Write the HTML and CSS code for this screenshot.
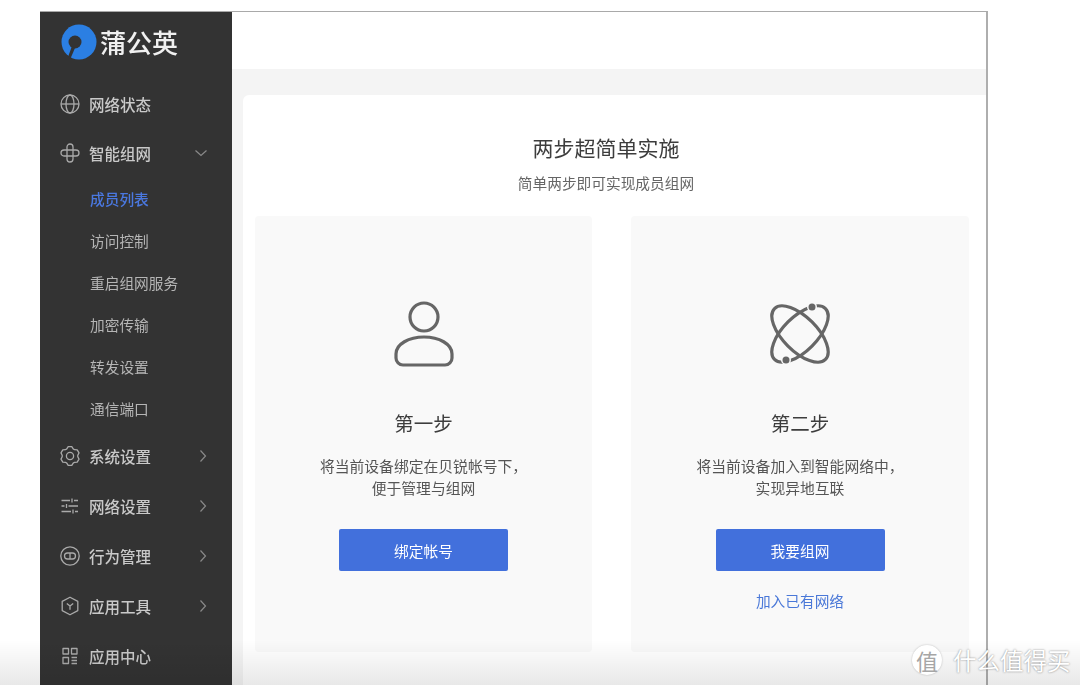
FILE: index.html
```html
<!DOCTYPE html>
<html lang="zh-CN">
<head>
    <meta charset="UTF-8">
    <title>蒲公英</title>
    <link rel="stylesheet" href="styles.css">
</head>

<body>
    <div class="window">
        <aside class="sidebar">
            <div class="logo">
                <svg class="logo-mark" width="36" height="36" viewBox="0 0 36 36">
                    <circle cx="18" cy="18" r="17.5" fill="#2b7fe3"/>
                    <circle cx="14" cy="18" r="6.5" fill="#333"/>
                    <path d="M11 22 L7 33 L9.5 34.5 L14 24 Z" fill="#333"/>
                </svg>
                <span>蒲公英</span>
            </div>
            <nav class="menu">
                <a class="menu-item short">
                    <svg class="icon" viewBox="0 0 20 20"><circle cx="10" cy="10" r="9"/><ellipse cx="10" cy="10" rx="4" ry="9"/><path d="M1 10H19"/></svg>
                    <span>网络状态</span>
                </a>
                <a class="menu-item short">
                    <svg class="icon" viewBox="0 0 20 20"><path d="M7 13V4a3 3 0 0 1 6 0V7M7 7H16a3 3 0 0 1 0 6H13M13 7V16a3 3 0 0 1-6 0V13M13 13H4a3 3 0 0 1 0-6H7"/></svg>
                    <span>智能组网</span>
                    <svg class="arrow" viewBox="0 0 14 14"><path d="M1.5 4.5L7 9.5L12.5 4.5"/></svg>
                </a>
                <div class="submenu">
                    <a class="sub-item active">成员列表</a>
                    <a class="sub-item">访问控制</a>
                    <a class="sub-item">重启组网服务</a>
                    <a class="sub-item">加密传输</a>
                    <a class="sub-item">转发设置</a>
                    <a class="sub-item">通信端口</a>
                </div>
                <a class="menu-item">
                    <svg class="icon" viewBox="0 0 20 20"><path d="M8.2 .7H11.8L13.2 2.9L14.6 3.7L17.2 3.8L19 6.9L17.8 9.2V10.8L19 13.1L17.2 16.2L14.6 16.3L13.2 17.1L11.8 19.3H8.2L6.8 17.1L5.4 16.3L2.8 16.2L1 13.1L2.2 10.8V9.2L1 6.900L2.8 3.8L5.4 3.7L6.8 2.9Z"/><circle cx="10" cy="10" r="3.6"/></svg>
                    <span>系统设置</span>
                    <svg class="arrow" viewBox="0 0 14 14"><path d="M6.5 1.5L11.5 7L6.5 12.5"/></svg>
                </a>
                <a class="menu-item">
                    <svg class="icon" viewBox="0 0 20 20"><path d="M1.5 4.5H10M14 4.5H18M1.5 10H4.5M8.5 10H18M1.5 15.5H11M15 15.5H18M12 2.5V6.5M6.5 8V12M13 13.5V17.5"/></svg>
                    <span>网络设置</span>
                    <svg class="arrow" viewBox="0 0 14 14"><path d="M6.5 1.5L11.5 7L6.5 12.5"/></svg>
                </a>
                <a class="menu-item">
                    <svg class="icon" viewBox="0 0 20 20"><circle cx="10" cy="10" r="9.2"/><rect x="4.5" y="7" width="11" height="6" rx="3"/><path d="M10 7V13"/></svg>
                    <span>行为管理</span>
                    <svg class="arrow" viewBox="0 0 14 14"><path d="M6.5 1.5L11.5 7L6.5 12.5"/></svg>
                </a>
                <a class="menu-item">
                    <svg class="icon" viewBox="0 0 20 20"><path d="M10 1.2L17.8 5.4V14.6L10 18.8L2.2 14.6V5.4Z"/><path d="M6.8 7.5L10 10L13.2 7.5M10 10V13.8"/></svg>
                    <span>应用工具</span>
                    <svg class="arrow" viewBox="0 0 14 14"><path d="M6.5 1.5L11.5 7L6.5 12.5"/></svg>
                </a>
                <a class="menu-item">
                    <svg class="icon" viewBox="0 0 20 20"><rect x="3" y="2.5" width="5.5" height="5.5"/><rect x="11.5" y="2.5" width="5.5" height="5.5"/><path d="M3 11.5H8.5V17.5H3ZM11.5 11.5H17M11.5 14.5H17M11.5 17.5H17"/></svg>
                    <span>应用中心</span>
                </a>
            </nav>
        </aside>

        <div class="main">
            <header class="topbar"></header>
            <div class="content">
                <section class="card">
                    <div class="card-head">
                        <h1>两步超简单实施</h1>
                        <p class="subtitle">简单两步即可实现成员组网</p>
                    </div>
                    <div class="steps">
                        <div class="step">
                            <svg class="step-icon" width="62" height="66" viewBox="0 0 62 66">
                                <circle cx="31" cy="16" r="14"/>
                                <path d="M31 36C46 36 59 43 59 53V57a7 7 0 0 1-7 7H10a7 7 0 0 1-7-7V53C3 43 16 36 31 36Z"/>
                            </svg>
                            <h2>第一步</h2>
                            <p class="desc">将当前设备绑定在贝锐帐号下，<br>便于管理与组网</p>
                            <a class="btn">绑定帐号</a>
                        </div>
                        <div class="step">
                            <svg class="step-icon" width="62" height="66" viewBox="0 0 62 66">
                                <ellipse cx="31" cy="33" rx="36" ry="17" transform="rotate(45 31 33)"/>
                                <ellipse cx="31" cy="33" rx="36" ry="17" transform="rotate(-45 31 33)"/>
                                <circle class="dot" cx="43" cy="6" r="3.5"/>
                                <circle class="dot" cx="17" cy="59" r="3.5"/>
                            </svg>
                            <h2>第二步</h2>
                            <p class="desc">将当前设备加入到智能网络中，<br>实现异地互联</p>
                            <a class="btn">我要组网</a>
                            <a class="link">加入已有网络</a>
                        </div>
                    </div>
                </section>
            </div>
        </div>
    </div>

    <div class="bottom-fade"></div>
    <div class="watermark">
        <span class="wm-badge">值</span>
        <span class="wm-text">什么值得买</span>
    </div>
</body>
</html>
```

FILE: styles.css
```css
* {
    box-sizing: border-box;
}

html, body {
    height: 100%;
}

body {
    margin: 0;
    background-color: #ffffff;
    font-family: "Noto Sans CJK SC", "Noto Sans", sans-serif;
    overflow: hidden;
    position: relative;
}

.window {
    width: 948px;
    height: 674px;
    margin: 11px 0 0 40px;
    display: flex;
    background-color: #ffffff;
    border-top: 1px solid #a9a9a9;
    border-right: 2px solid #aeaeae;
    filter: blur(0.5px);
}

.sidebar {
    width: 192px;
    flex-shrink: 0;
    background-color: #333333;
    color: #c9c9c9;
}

.logo {
    height: 67px;
    display: flex;
    align-items: center;
    padding: 0 0 8px 21px;
    color: #f0f0f0;
    font-size: 26px;
    font-weight: 500;
}

.logo-mark {
    margin-right: 3px;
}

.menu a {
    display: flex;
    align-items: center;
}

.menu-item {
    height: 50px;
    padding-left: 20px;
    font-size: 15.5px;
    font-weight: 500;
}

.menu-item.short {
    height: 49px;
}

.icon {
    width: 20px;
    height: 20px;
    margin-right: 9px;
    fill: none;
    stroke: #aaaaaa;
    stroke-width: 1.3;
    stroke-linejoin: round;
}

.arrow {
    width: 14px;
    height: 14px;
    margin-left: auto;
    margin-right: 24px;
    fill: none;
    stroke: #8a8a8a;
    stroke-width: 1.2;
}

.submenu {
    margin-bottom: 2px;
}

.sub-item {
    height: 42px;
    padding-left: 50px;
    font-size: 14.7px;
    color: #b5b5b5;
}

.sub-item.active {
    color: #4a78e0;
    font-weight: 500;
}

.main {
    flex: 1;
    min-width: 0;
    display: flex;
    flex-direction: column;
}

.topbar {
    height: 57px;
    flex-shrink: 0;
    background-color: #ffffff;
}

.content {
    flex: 1;
    background-color: #f4f4f4;
    padding: 26px 0 0 11px;
}

.card {
    height: 100%;
    background-color: #ffffff;
    border-radius: 6px 0 0 0;
    padding: 38px 16px 0 12px;
    text-align: center;
}

.card-head {
    padding-right: 13px;
}

.card h1 {
    margin: 0;
    font-size: 21px;
    font-weight: 400;
    line-height: 28px;
    color: #3d3d3d;
}

.subtitle {
    margin: 12px 0 0;
    font-size: 14.7px;
    line-height: 20px;
    color: #666666;
}

.steps {
    display: grid;
    grid-template-columns: 337px 338px;
    gap: 39px;
    margin-top: 23px;
}

.step {
    height: 436px;
    background-color: #f9f9f9;
    border-radius: 4px;
    padding-top: 85px;
    display: flex;
    flex-direction: column;
    align-items: center;
}

.step-icon {
    fill: none;
    stroke: #666666;
    stroke-width: 3.2;
}

.step-icon .dot {
    fill: #666666;
    stroke: #f9f9f9;
    stroke-width: 3;
    paint-order: stroke;
}

.step h2 {
    margin: 43px 0 0;
    font-size: 19.5px;
    font-weight: 400;
    line-height: 26px;
    color: #3d3d3d;
}

.desc {
    margin: 19px 0 0;
    font-size: 14.8px;
    line-height: 22px;
    color: #555555;
}

.btn {
    width: 169px;
    height: 42px;
    margin-top: 30px;
    display: flex;
    align-items: center;
    justify-content: center;
    background-color: #4270dc;
    border-radius: 2px;
    font-size: 14.7px;
    color: #ffffff;
}

.link {
    margin-top: 20px;
    font-size: 14.7px;
    line-height: 20px;
    color: #4a78d8;
}

.bottom-fade {
    position: absolute;
    left: 0;
    right: 0;
    bottom: 0;
    height: 45px;
    background: linear-gradient(rgba(0, 0, 0, 0), rgba(0, 0, 0, 0.09));
}

.watermark {
    position: absolute;
    left: 912px;
    top: 645px;
    display: flex;
    align-items: center;
    gap: 11px;
}

.wm-badge {
    width: 30px;
    height: 30px;
    border-radius: 50%;
    background-color: #ffffff;
    display: flex;
    align-items: center;
    justify-content: center;
    font-size: 22px;
    color: #a6a6a6;
    box-shadow: 0 0 2px rgba(0, 0, 0, 0.25);
}

.wm-text {
    font-size: 23.5px;
    line-height: 30px;
    color: #ffffff;
    text-shadow: 0 0 2px rgba(0, 0, 0, 0.5);
}
```
